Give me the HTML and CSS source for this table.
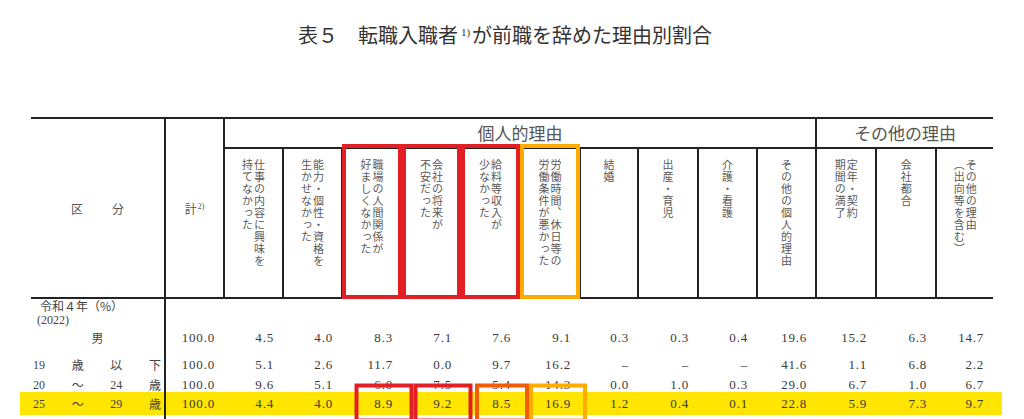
FILE: index.html
```html
<!DOCTYPE html>
<html lang="ja">
<head>
<meta charset="utf-8">
<title>表５ 転職入職者が前職を辞めた理由別割合</title>
<link rel="stylesheet" href="styles.css">
</head>
<body>
<div class="page">
  <h1 class="title">表５　転職入職者<sup>1)</sup>が前職を辞めた理由別割合</h1>
  <table class="tbl">
    <colgroup>
      <col class="w-edl"><col class="w-kubun"><col class="w59">
      <col class="w59"><col class="w59"><col class="w60"><col class="w59"><col class="w59">
      <col class="w60"><col class="w58"><col class="w60"><col class="w59"><col class="w59">
      <col class="w60"><col class="w60"><col class="w57">
      <col class="w-edr">
    </colgroup>
    <thead>
      <tr class="hr1">
        <td class="edge" rowspan="2"></td>
        <th class="kubun" rowspan="2"><span>区</span><span>分</span></th>
        <th class="kei" rowspan="2">計<sup>2)</sup></th>
        <th class="grp" colspan="10">個人的理由</th>
        <th class="grp last" colspan="3">その他の理由</th>
        <td class="edge" rowspan="2"></td>
      </tr>
      <tr class="hr2">
        <th class="vh"><div class="vt">仕事の内容に興味を<br>持てなかった</div></th>
        <th class="vh"><div class="vt">能力・個性・資格を<br>生かせなかった</div></th>
        <th class="vh box-red"><div class="vt">職場の人間関係が<br>好ましくなかった</div></th>
        <th class="vh box-red"><div class="vt">会社の将来が<br>不安だった</div></th>
        <th class="vh box-red"><div class="vt">給料等収入が<br>少なかった</div></th>
        <th class="vh box-org"><div class="vt">労働時間、休日等の<br>労働条件が悪かった</div></th>
        <th class="vh"><div class="vt">結婚</div></th>
        <th class="vh"><div class="vt">出産・育児</div></th>
        <th class="vh"><div class="vt">介護・看護</div></th>
        <th class="vh"><div class="vt">その他の個人的理由</div></th>
        <th class="vh"><div class="vt">定年・契約<br>期間の満了</div></th>
        <th class="vh"><div class="vt">会社都合</div></th>
        <th class="vh last"><div class="vt">その他の理由<br>（出向等を含む）</div></th>
      </tr>
    </thead>
    <tbody>
      <tr class="r-era">
        <td class="edge"></td>
        <td class="lab"><div class="era"><span class="era1">令和４年（%）</span><span class="era2">(2022)</span></div></td>
        <td></td><td></td><td></td><td></td><td></td><td></td><td></td><td></td><td></td><td></td><td></td><td></td><td></td><td></td>
        <td class="edge"></td>
      </tr>
      <tr class="r-m">
        <td class="edge"></td>
        <td class="lab lab-c">男</td>
        <td class="n">100.0</td><td class="n">4.5</td><td class="n">4.0</td><td class="n">8.3</td><td class="n">7.1</td><td class="n">7.6</td><td class="n">9.1</td><td class="n">0.3</td><td class="n">0.3</td><td class="n">0.4</td><td class="n">19.6</td><td class="n">15.2</td><td class="n">6.3</td><td class="n">14.7</td>
        <td class="edge"></td>
      </tr>
      <tr class="r-19">
        <td class="edge"></td>
        <td class="lab"><div class="age"><span class="d">19</span><span>歳</span><span>以</span><span>下</span></div></td>
        <td class="n">100.0</td><td class="n">5.1</td><td class="n">2.6</td><td class="n">11.7</td><td class="n">0.0</td><td class="n">9.7</td><td class="n">16.2</td><td class="n">–</td><td class="n">–</td><td class="n">–</td><td class="n">41.6</td><td class="n">1.1</td><td class="n">6.8</td><td class="n">2.2</td>
        <td class="edge"></td>
      </tr>
      <tr class="r-20">
        <td class="edge"></td>
        <td class="lab"><div class="age"><span class="d">20</span><span>～</span><span class="d">24</span><span>歳</span></div></td>
        <td class="n">100.0</td><td class="n">9.6</td><td class="n">5.1</td><td class="n">6.0</td><td class="n">7.5</td><td class="n">5.4</td><td class="n">14.3</td><td class="n">0.0</td><td class="n">1.0</td><td class="n">0.3</td><td class="n">29.0</td><td class="n">6.7</td><td class="n">1.0</td><td class="n">6.7</td>
        <td class="edge"></td>
      </tr>
      <tr class="r-25 hl">
        <td class="edge"></td>
        <td class="lab"><div class="age"><span class="d">25</span><span>～</span><span class="d">29</span><span>歳</span></div></td>
        <td class="n">100.0</td><td class="n">4.4</td><td class="n">4.0</td>
        <td class="n"><span class="mk mk-red">8.9</span></td>
        <td class="n"><span class="mk mk-red">9.2</span></td>
        <td class="n"><span class="mk mk-orr">8.5</span></td>
        <td class="n"><span class="mk mk-org">16.9</span></td>
        <td class="n">1.2</td><td class="n">0.4</td><td class="n">0.1</td><td class="n">22.8</td><td class="n">5.9</td><td class="n">7.3</td><td class="n">9.7</td>
        <td class="edge"></td>
      </tr>
      <tr class="r-end">
        <td class="edge"></td>
        <td class="lab"></td>
        <td></td><td></td><td></td><td></td><td></td><td></td><td></td><td></td><td></td><td></td><td></td><td></td><td></td><td></td>
        <td class="edge"></td>
      </tr>
    </tbody>
  </table>
</div>
</body>
</html>
```
FILE: styles.css
```css
* { box-sizing: border-box; }
html, body { margin: 0; padding: 0; background: #fff; }
body {
  font-family: "Noto Sans CJK JP", "Noto Sans", sans-serif;
  color: #333;
  width: 1024px;
  height: 419px;
  overflow: hidden;
}
.page { padding: 0; }

.title {
  margin: 0 0 68px 0;
  padding: 21px 14px 0 0;
  font-size: 20px;
  line-height: 28px;
  font-weight: normal;
  text-align: center;
  color: #333;
}
.title sup {
  font-family: "Liberation Serif", serif;
  font-size: 11px;
  line-height: 0;
  vertical-align: 7px;
  margin: 0 2px 0 3px;
}

.tbl {
  margin-left: 20px;
  border-collapse: collapse;
  table-layout: fixed;
  width: 982px;
}
.w-edl { width: 11px; }
.w-kubun { width: 134px; }
.w-edr { width: 9px; }
.w57 { width: 57px; }
.w58 { width: 58px; }
.w59 { width: 59px; }
.w60 { width: 60px; }

.tbl th, .tbl td { padding: 0; }
.tbl .edge { border: none; }

.tbl thead th {
  border: 2px solid #222;
  font-weight: normal;
  color: #555;
}
.tbl thead th.kubun { border-left: none; }
.tbl thead th.last { border-right: none; }

.hr1 { height: 30px; }
.hr2 { height: 150px; }

.kubun {
  font-size: 12px;
  vertical-align: middle;
}
.kubun span { display: inline-block; }
.kubun span + span { margin-left: 29px; }

.kei {
  font-size: 12px;
  vertical-align: middle;
}
.kei sup {
  font-family: "Liberation Serif", serif;
  font-size: 8px;
  line-height: 0;
  vertical-align: 5px;
  margin-left: 1px;
}

.grp {
  font-size: 17px;
  line-height: 26px;
  color: #444;
  text-align: center;
  vertical-align: middle;
}

.tbl .vh {
  vertical-align: top;
  text-align: center;
  padding-top: 10px;
  position: relative;
}
.vt {
  display: inline-block;
  writing-mode: vertical-rl;
  font-size: 11px;
  line-height: 12px;
  letter-spacing: 1px;
  color: #5a5a5a;
  text-align: start;
}

.box-red::after, .box-org::after {
  content: "";
  position: absolute;
  top: -5px;
  bottom: -2px;
  left: -1px;
  right: -1px;
  border: 4px solid #e31f26;
  pointer-events: none;
}
.box-org::after { border-color: #ffab00; }

/* body */
.tbl tbody td {
  font-family: "Liberation Serif", serif;
  font-size: 13px;
  line-height: 14px;
  color: #3a3a3a;
  vertical-align: top;
}
.tbl tbody td.lab {
  border-right: 2px solid #222;
  font-family: "Noto Sans CJK JP", sans-serif;
  font-size: 12px;
  color: #444;
}
.lab-c { text-align: center; }
.tbl tbody td.n {
  text-align: right;
  padding-right: 9px;
  letter-spacing: 0.8px;
}

.era { display: flex; flex-direction: column; }
.era1 { padding-left: 9px; }
.era2 { padding-left: 6px; font-family: "Liberation Serif", serif; font-size: 12px; }

.age {
  display: flex;
  justify-content: space-between;
  padding: 0 3px 0 2px;
}
.age span { display: block; width: 12px; text-align: center; }
.age .d { font-family: "Liberation Serif", serif; font-size: 12px; text-align: left; }

.r-era td { height: 29px; }
.r-m td { padding-top: 4px; padding-bottom: 9px; }
.r-19 td { padding-top: 4px; padding-bottom: 3px; }
.r-20 td { padding-top: 3px; padding-bottom: 0; }
.r-25 td { padding-top: 5px; padding-bottom: 4px; }
.r-end td { height: 8px; }

.hl td { background: #ffe500; }

.mk { position: relative; display: inline-block; }
.mk::after {
  content: "";
  position: absolute;
  left: 50%;
  top: calc(50% - 1px);
  width: 51px;
  height: 31px;
  transform: translate(-50%, -50%);
  border: 4px solid #e31f26;
}
.mk-orr::after { width: 46px; border-color: #f25c05; }
.mk-org::after { width: 50px; border-color: #ffab00; }
```
